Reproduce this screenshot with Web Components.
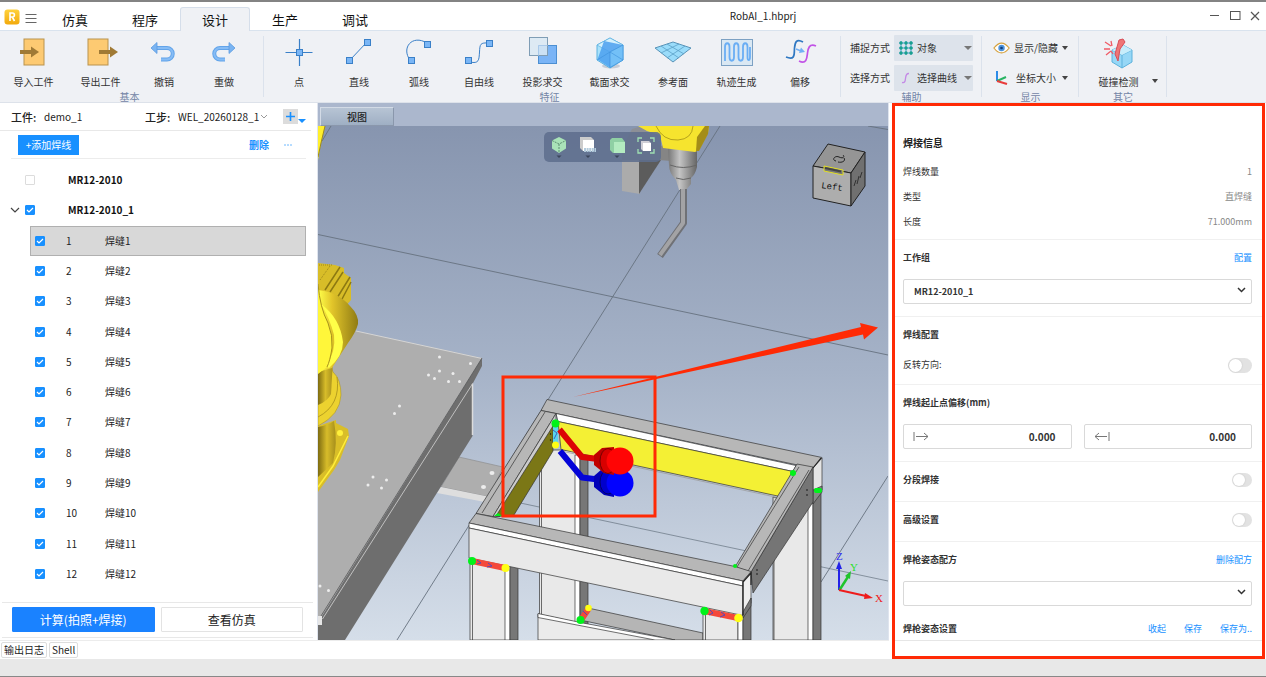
<!DOCTYPE html>
<html lang="zh-CN">
<head>
<meta charset="utf-8">
<title>RobAI_1.hbprj</title>
<style>
  html, body { margin: 0; min-height: 100%; }
  body { font: 10px/16px "Noto Sans CJK SC", sans-serif; color: #222; background: #fff; }
</style>
</head>
<body>
<robot-app></robot-app>
<script>
const BASE = `*{box-sizing:border-box}button,input,select{font:inherit;color:inherit;margin:0}button{border:0;background:none;padding:0}a{text-decoration:none;color:#1890ff}svg{display:block}`;
function component(name, css, html) {
  const t = document.createElement('template');
  t.innerHTML = `<style>${BASE}${css}</style>${typeof html === 'string' ? html : ''}`;
  customElements.define(name, class extends HTMLElement {
    constructor() {
      super();
      const root = this.attachShadow({ mode: 'open' });
      root.append(t.content.cloneNode(true));
      if (typeof html === 'function') root.lastChild.insertAdjacentHTML('afterend', html(this));
    }
  });
}

/* ---------- title bar ---------- */
component('title-bar', `
  :host{display:grid;grid-template-columns:auto auto 1fr 130px;height:31px;background:#fff;border-top:2px solid #838383;border-bottom:1px solid #d9e3ee}
  .brand{display:flex;align-items:center;gap:5px;width:40px;padding:0 0 0 4px}
  nav{display:flex;align-items:flex-end;height:29px}
  nav a{width:70px;height:24px;line-height:24px;text-align:center;font-size:13px;color:#111;border:1px solid transparent;border-bottom:0;border-radius:3px 3px 0 0}
  nav a[aria-current]{background:#eff1f5;border-color:#d5deea}
  h1{margin:0;padding-bottom:2px;align-self:center;text-align:center;font-size:10px;font-weight:400;line-height:16px}
  .win{display:flex;justify-content:flex-end;align-items:center;gap:10px;padding:0 6px 3px 0}
  .win button{width:10px;height:12px}
`, `
  <div class="brand">
    <svg width="16" height="16" viewBox="0 0 16 16"><defs><linearGradient id="g" x2="0" y2="1"><stop stop-color="#ffd23c"/><stop offset="1" stop-color="#f2a90c"/></linearGradient></defs><rect x=".5" y=".5" width="15" height="15" rx="3" fill="url(#g)"/><path d="M6 12V4h2.4a2 2 0 0 1 0 4H6m2.3 0L10.500 12" fill="none" stroke="#fff" stroke-width="1.600"/></svg>
    <svg width="12" height="12" viewBox="0 0 12 12"><path d="M.5 3.500h11M.5 7.500h11M.5 11.500h11" stroke="#666"/></svg>
  </div>
  <nav><a href="#">仿真</a><a href="#">程序</a><a href="#" aria-current="page">设计</a><a href="#">生产</a><a href="#">调试</a></nav>
  <h1>RobAI_1.hbprj</h1>
  <div class="win">
    <button aria-label="最小化"><svg width="10" height="12"><path d="M0 6.500h9" stroke="#555"/></svg></button>
    <button aria-label="最大化"><svg width="11" height="12"><rect x=".5" y="2.500" width="9.500" height="8" fill="none" stroke="#555"/></svg></button>
    <button aria-label="关闭"><svg width="10" height="12"><path d="M1 3l8 8M9 3l-8 8" stroke="#555" stroke-width="1.200"/></svg></button>
  </div>`);

/* ---------- ribbon ---------- */
component('ribbon-group', `
  :host{display:flex;flex-direction:column;height:71px;padding-top:4px;position:relative}
  :host::after{content:"";position:absolute;right:0;top:5px;height:61px;border-right:1px solid #dbe2ec}
  .row{display:flex;height:56px}
  .cap{height:11px;line-height:11px;text-align:center;color:#7385a6}
`, `<div class="row"><slot></slot></div><div class="cap"><slot name="caption"></slot></div>`);

component('tool-button', `
  :host{display:block;width:60px}
  :host([wide]){width:67px}
  button{display:flex;flex-direction:column;align-items:center;gap:5px;width:100%;white-space:nowrap;color:#333}
  .ic{width:34px;height:34px}
`, `<button><span class="ic"><slot name="icon"></slot></span><span><slot></slot></span></button>`);

const IC = {
  imp: `<rect x="7" y="4" width="20" height="26" fill="#fdca72" stroke="#b9934e"/><path d="M3 17h13" stroke="#a07a35" stroke-width="4"/><path d="M14 11.500l8 5.500-8 5.500z" fill="#a07a35"/>`,
  exp: `<rect x="4" y="4" width="20" height="26" fill="#fdca72" stroke="#b9934e"/><path d="M15 17h13" stroke="#a07a35" stroke-width="4"/><path d="M26 11.500l8 5.500-8 5.500z" fill="#a07a35"/>`,
  undo: `<path d="M9 13h11a5.500 5.500 0 0 1 0 11.500h-6" fill="none" stroke="#62a4ea" stroke-width="4"/><path d="M9 13h11a5.500 5.500 0 0 1 0 11.500h-6" fill="none" stroke="#86bcf5" stroke-width="2"/><path d="M10 7.500v11L4 13z" fill="#7ab4f2" stroke="#5b9be0" stroke-width=".8"/>`,
  redo: `<path d="M24 13H13a5.500 5.500 0 0 0 0 11.500h5" fill="none" stroke="#62a4ea" stroke-width="4"/><path d="M24 13H13a5.500 5.500 0 0 0 0 11.500h5" fill="none" stroke="#86bcf5" stroke-width="2"/><path d="M22 7.500v11l6-5.500z" fill="#7ab4f2" stroke="#5b9be0" stroke-width=".8"/>`,
  pt: `<path d="M3.500 17.500h27M17.500 4v27" stroke="#3a80c8" stroke-width="1.200"/><rect x="14.500" y="14.500" width="6" height="6" fill="#7ab6f6" stroke="#3a80c8"/>`,
  line: `<path d="M8 25L25 7" stroke="#3a80c8"/><rect x="4.500" y="22.500" width="6" height="6" fill="#7ab6f6" stroke="#3a80c8"/><rect x="22.500" y="4.500" width="6" height="6" fill="#7ab6f6" stroke="#3a80c8"/>`,
  arc: `<path d="M8 25C-1 13 10-1 25 8" fill="none" stroke="#3a80c8"/><rect x="6.500" y="22.500" width="6" height="6" fill="#7ab6f6" stroke="#3a80c8"/><rect x="22.500" y="6.500" width="6" height="6" fill="#7ab6f6" stroke="#3a80c8"/>`,
  free: `<path d="M8 27c9 2 9-2 9.500-10S18 7.500 27 8" fill="none" stroke="#3a80c8"/><rect x="3.500" y="22.500" width="6" height="6" fill="#7ab6f6" stroke="#3a80c8"/><rect x="24.500" y="5.500" width="6" height="6" fill="#7ab6f6" stroke="#3a80c8"/>`,
  proj: `<rect x="12.500" y="10.500" width="18" height="18" fill="#7ab4f6" stroke="#4c8fd2"/><rect x="3.500" y="2.500" width="18" height="18" fill="#d9e9f3" fill-opacity=".85" stroke="#7f9db5"/><path d="M12.500 20.500v-10h9" fill="none" stroke="#a9c9ea"/>`,
  cube: `<ellipse cx="18" cy="31" rx="9" ry="2.500" fill="#c6ccd6"/><path d="M17 3l13 7v15l-13 8-13-8V10z" fill="#a9e2fb" stroke="#5bb0e0"/><path d="M4 10l13-7 13 7-13 7z" fill="#d4f1fd" stroke="#5bb0e0" stroke-width=".7"/><path d="M11 6L4.500 24.500 17 32.500V17l13-7z" fill="#4ba0ee" opacity=".85"/><path d="M17 17v15.500L30 25V10z" fill="#73c0f7" stroke="#3c91dc" stroke-width=".7"/><path d="M4 25l13-8 13 8" fill="none" stroke="#3c91dc" stroke-width=".6"/>`,
  plane: `<path d="M-1 13L17 7l18 6-18 14z" fill="#9adcfa" stroke="#5a94b8"/><path d="M5 11l18 12M11 9l17 10M29 11L11 23M23 9L5 18" stroke="#5a9fc6" stroke-width=".8"/>`,
  track: `<rect x="1.500" y="4.500" width="31" height="26" fill="#dae8f3" stroke="#7da1c3"/><path d="M5 26V12c0-5 4.500-5 4.500 0v10c0 5 4.500 5 4.500 0V12c0-5 4.500-5 4.500 0v10c0 5 4.500 5 4.500 0V12c0-5 4.500-5 4.500 0v10c0 4 2.500 4 2.500 0V12" fill="none" stroke="#6aaef4" stroke-width="1.800"/>`,
  off: `<path d="M3 22c10 4 8-4 8.500-9S13 3 20 7" fill="none" stroke="#2f78c2" stroke-width="1.700"/><path d="M16 26c8 4 8-4 8.500-8S26 8 33 11" fill="none" stroke="#c153e6" stroke-width="1.700"/><path d="M13 14l5 2" stroke="#72b0f5" stroke-width="1.600"/><path d="M18 12.500l4 4.500-6 1z" fill="#72b0f5"/>`,
  hit: `<path d="M10 15l11-5 9 5v12l-10 6-10-6z" fill="#96d7f6" stroke="#5db1dc"/><path d="M10 15l10 5 10-5M20 20v13" fill="none" stroke="#5db1dc"/><path d="M10 15l11-5 9 5-10 5z" fill="#c7edfb"/><path d="M17 5l4-1 2 3-5 7-2 12-3-7z" fill="#ee7676" stroke="#d94c56"/><path d="M3 7l6 4M2 14l6 0M4 20l5-4M9 6l1 5M11 19l-2-3" stroke="#f05b66" stroke-width="1.300"/>`
};
const tool = (k, label, wide) => `<tool-button ${wide ? 'wide' : ''}><svg slot="icon" width="34" height="34" viewBox="0 0 34 34" overflow="visible">${IC[k]}</svg>${label}</tool-button>`;

component('ribbon-combo', `
  :host{display:block;position:relative;width:79px;height:26px}
  select{appearance:none;width:100%;height:100%;border:0;background:#dde3eb;padding:0 12px 0 23px;color:#333;border-radius:1px}
  .ic{position:absolute;left:5px;top:6px}
  i{position:absolute;right:1px;top:11px;border:4px solid transparent;border-top-color:#777;pointer-events:none}
`, el => `<select aria-label="${el.getAttribute('label')}"><option>${el.getAttribute('value')}</option></select><span class="ic"><slot></slot></span><i></i>`);

component('ribbon-bar', `
  :host{display:flex;height:72px;background:#eff1f5;border-bottom:1px solid #dde2ea;overflow:hidden}
  .g1{width:264px;padding-right:5px}.g2{width:577px;padding:4px 11px 0 5px}.g3{width:141px}.g4{width:97px}.g5{width:88px}
  .aux{display:grid;grid-template-columns:44px 79px;row-gap:3px;padding-left:9px;align-items:center;height:56px;color:#333}
  .show{display:grid;row-gap:3px;padding-left:11px}
  .show button{display:flex;align-items:center;height:26px;gap:4px;color:#333;white-space:nowrap}
  .tri{border:3px solid transparent;border-top:4px solid #444;border-bottom:0;flex:none}
  .show .tri{margin-left:auto}
  .show button{width:75px}
  .hit{display:flex;align-items:flex-start;padding-left:6px}
  .hit .tri{margin-top:44px}
`, `
  <ribbon-group class="g1">${tool('imp','导入工件',1)}${tool('exp','导出工件',1)}${tool('undo','撤销')}${tool('redo','重做')}<span slot="caption">基本</span></ribbon-group>
  <ribbon-group class="g2">${tool('pt','点')}${tool('line','直线')}${tool('arc','弧线')}${tool('free','自由线')}${tool('proj','投影求交',1)}${tool('cube','截面求交',1)}${tool('plane','参考面')}${tool('track','轨迹生成',1)}${tool('off','偏移')}<span slot="caption">特征</span></ribbon-group>
  <ribbon-group class="g3"><div class="aux">
    <span>捕捉方式</span><ribbon-combo label="捕捉方式" value="对象"><svg width="14" height="14" viewBox="0 0 14 14"><path d="M2 0v14M7 0v14M12 0v14M0 2h14M0 7h14M0 12h14" stroke="#3c9fd0"/><g fill="#1aa08d"><circle cx="2" cy="2" r="1.700"/><circle cx="7" cy="2" r="1.700"/><circle cx="12" cy="2" r="1.700"/><circle cx="2" cy="7" r="1.700"/><circle cx="7" cy="7" r="1.700"/><circle cx="12" cy="7" r="1.700"/><circle cx="2" cy="12" r="1.700"/><circle cx="7" cy="12" r="1.700"/><circle cx="12" cy="12" r="1.700"/></g></svg></ribbon-combo>
    <span>选择方式</span><ribbon-combo label="选择方式" value="选择曲线"><svg width="14" height="14" viewBox="0 0 14 14"><path d="M3 11.500c6 1.500 1-9.500 7-9" fill="none" stroke="#c48ae6" stroke-width="1.300"/></svg></ribbon-combo>
  </div><span slot="caption">辅助</span></ribbon-group>
  <ribbon-group class="g4"><div class="show">
    <button><svg width="19" height="14" viewBox="0 0 19 14"><path d="M1 7q8.500-11 17 0-8.500 11-17 0z" fill="#fff" stroke="#d5a13c" stroke-width="1.300"/><circle cx="9.500" cy="7" r="3.600" fill="#4d93dc"/><circle cx="9.500" cy="7" r="1.500" fill="#123f7c"/></svg><span>显示/隐藏</span><i class="tri"></i></button>
    <button><svg width="19" height="16" viewBox="0 0 19 16"><path d="M4 1v10" stroke="#2c8be8" stroke-width="2"/><path d="M4 11l9-4" stroke="#28b463" stroke-width="2"/><path d="M4 11l10 3" stroke="#e83b3b" stroke-width="2"/></svg><span>坐标大小</span><i class="tri"></i></button>
  </div><span slot="caption">显示</span></ribbon-group>
  <ribbon-group class="g5"><div class="hit">${tool('hit','碰撞检测',1)}<i class="tri"></i></div><span slot="caption">其它</span></ribbon-group>`);

/* ---------- left panel ---------- */
const check = `input[type=checkbox]{appearance:none;width:10px;height:10px;border:1px solid #dcdcdc;border-radius:1px;background:#fff;display:block}
input[type=checkbox]:checked{border-color:#1890ff;background:#1890ff url("data:image/svg+xml,%3Csvg xmlns='http://www.w3.org/2000/svg' viewBox='0 0 8 8'%3E%3Cpath d='M1 4l2 2 4-4' fill='none' stroke='white' stroke-width='1.200'/%3E%3C/svg%3E") center/8px}`;
component('seam-row', `
  :host{display:block;flex:1 1 0;min-height:20px;margin-left:30px}
  :host([selected]){background:#d8d8d8;box-shadow:inset 0 0 0 1px #b0b0b0}
  label{display:grid;grid-template-columns:31px 39px 1fr;align-items:center;height:100%;padding-left:5px}
  ${check}
`, el => `<label><input type="checkbox" checked><span>${el.getAttribute('n')}</span><span>焊缝${el.getAttribute('n')}</span></label>`);
component('group-row', `
  :host{display:block;flex:1 1 0;min-height:20px}
  label{display:grid;grid-template-columns:15px 43px 1fr;align-items:center;height:100%;padding-left:10px;font-weight:700;color:#111}
  ${check}
`, el => `<label><svg width="10" height="6" viewBox="0 0 10 6">${el.hasAttribute('open') ? '<path d="M1 1l4 4 4-4" fill="none" stroke="#444" stroke-width="1.200"/>' : ''}</svg><input type="checkbox" ${el.hasAttribute('open') ? 'checked' : ''}><span>${el.getAttribute('name')}</span></label>`);

component('weld-panel', `
  :host{display:flex;flex-direction:column;background:#fff;min-height:0}
  .head{display:grid;grid-template-columns:33px 101px 33px 90px 30px 8px;align-items:center;height:28px;padding-left:11px;margin-right:6px;border-bottom:1px solid #e8e8e8;color:#222}
  .head b{font-weight:500;font-size:11px}
  .job{position:relative;display:flex;align-items:center}
  .job select{appearance:none;width:81px;border:0;background:none;padding:0;height:16px;line-height:16px;overflow:hidden;text-overflow:clip}
  .job svg{margin-left:2px;flex:none}
  .plus{width:15px;height:15px;background:#dcdcdc;justify-self:end}
  .more{border:4px solid transparent;border-top:4px solid #1890ff;border-bottom:0;margin-top:8px;width:8px}
  .bar{display:flex;align-items:center;height:28px;margin:0 11px;padding:0 14px 0 7px;border-bottom:1px solid #ececec}
  .add{width:61px;height:20px;background:#1890ff;color:#fff}
  .del{margin-left:auto;font-weight:700}
  .dots{margin-left:15px;width:8px}
  .tree{flex:1;display:flex;flex-direction:column;padding:6px 11px 13px 0}
  .foot{display:grid;grid-template-columns:1fr 1fr;gap:6px;margin:0 4px 2px 2px;padding:4px 10px 5px;border-top:1px solid #e8e8e8;border-bottom:1px solid #e8e8e8}
  .foot button{height:25px;font-size:12px;border:1px solid #e3e3e3;border-radius:1px}
  .foot .go{background:#1a82ff;border-color:#1a82ff;color:#fff}
`, `
  <div class="head"><b>工件:</b><span>demo_1</span><b>工步:</b>
    <div class="job"><select aria-label="工步"><option>WEL_20260128_1</option></select><svg width="6" height="4" viewBox="0 0 6 4"><path d="M0 0l3 3 3-3" fill="none" stroke="#999"/></svg></div>
    <button class="plus" aria-label="新增"><svg width="15" height="15"><path d="M3 7.500h9M7.500 3v9" stroke="#1890ff" stroke-width="1.600"/></svg></button><i class="more"></i></div>
  <div class="bar"><button class="add">+添加焊线</button><a class="del" href="#">删除</a><a class="dots" href="#" aria-label="更多"><svg width="8" height="2"><path d="M0 1h2M3 1h2M6 1h2" stroke="#6db8ff"/></svg></a></div>
  <div class="tree"><group-row name="MR12-2010"></group-row><group-row open name="MR12-2010_1"></group-row>
  ${Array.from({length:12},(_,i)=>`<seam-row n="${i+1}" ${i?'':'selected'}></seam-row>`).join('')}</div>
  <div class="foot"><button class="go">计算(拍照+焊接)</button><button>查看仿真</button></div>`);

/* ---------- 3D view ---------- */
const holes = [[439.5,357],[470.500,363.500],[439.500,371],[453,373.500],[428.500,375],[434.500,378.500],[448.500,381.500],[459.500,381.500],[399.500,406],[394.500,413.500],[373,477],[386.500,480],[368,485],[381.500,488],[320,586],[328.500,590.500]];
component('scene-3d', `
  :host{display:block;position:relative;min-height:0;background:linear-gradient(#8795af,#a6b3c8 48%,#d5dee9)}
  svg.s{position:absolute;inset:0;width:100%;height:100%}
  text{font-family:"Liberation Mono",monospace}
  .axis text{font-family:"Liberation Serif",serif}
`, `
<svg class="s" viewBox="318 126 570 514" preserveAspectRatio="xMidYMid slice">
  <defs>
    <linearGradient id="y"><stop stop-color="#ffff4a"/><stop offset=".35" stop-color="#e2c52a"/><stop offset="1" stop-color="#8f7b14"/></linearGradient>
    <linearGradient id="y2"><stop stop-color="#7d6b10"/><stop offset=".5" stop-color="#d7bc2a"/><stop offset="1" stop-color="#a68f1c"/></linearGradient>
    <linearGradient id="m"><stop stop-color="#777"/><stop offset=".4" stop-color="#c4c4c4"/><stop offset="1" stop-color="#666"/></linearGradient>
  </defs>
  <g stroke="#66727f" fill="none"><path d="M318 234.500L888 355M720 126L397 640M331 126l-9 15M868 126l20 3.500M888 476l-67 106" stroke-width=".9"/><path d="M518 502.500L888 581" stroke-width=".7"/></g>
  <!-- work table -->
  <path d="M459 457l44 10-14 30-48-10z" fill="#aeaeae" stroke="#888" stroke-width=".6"/><path d="M441 487l49 10-5 5-48-9z" fill="#dedede"/>
  <path d="M318 331h38l126 27-160 258-4 4z" fill="#aeaeae"/><path d="M356 331l126 27.500" stroke="#d5d5d5"/>
  <path d="M482 358v8l-9.500 18v52L345 640h-27v-20l4-4z" fill="#6e6e6e"/>
  <path d="M472.500 384v51" stroke="#dcdcdc" stroke-width="1.500"/><path d="M473 383L322.500 619" stroke="#c9c9c9" stroke-width=".9"/><path d="M482 358L321 616" stroke="#555" stroke-width=".8"/>
  <rect x="318" y="616" width="4" height="9" fill="#e6e6e6"/>
  <g fill="#ededed">${holes.map(([x,y])=>`<circle cx="${x}" cy="${y}" r="1.500"/>`).join('')}<ellipse cx="492" cy="473" rx="2.500" ry="2"/><ellipse cx="483.500" cy="487" rx="2.500" ry="2"/></g>
  <!-- robot at the left edge -->
  <path d="M318 126h7l-4 17-3 17z" fill="#ffef2c"/><path d="M325 126l-4 17-3 14" fill="none" stroke="#9d8a1c"/>
  <path d="M318 263l17 2 9 3v5l7 5v22l-6 7-27-15z" fill="#d8bd28"/><path d="M340 267l-15 23M343 272l-13 20M350 277l-13 21M351 282l-10 19" stroke="#8d7912" stroke-width="1.500"/><path d="M319 265h14M330 266l-10 14" stroke="#9d871b" stroke-dasharray="1 1"/>
  <path d="M318 426l18-6v3l12 6 1 7-9 24-6 10-16 22z" fill="#d9be28"/><path d="M318 427q10-2 16-6 4 22-1 42l-15 14z" fill="url(#y2)"/><circle cx="340" cy="433" r="3" fill="#fff13c"/><path d="M348 436l-15 30-15 21" stroke="#ffee3a" fill="none" stroke-width="1.500"/>
  <path d="M318 366h13l2 6q8 7 8 23-1 20-23 31z" fill="#ecd22f" stroke="#a58e1c" stroke-width=".5"/><path d="M337 377q4 28-19 40" fill="none" stroke="#b59d20"/>
  <path d="M318 360h15l-2 34q-3 7-13 11z" fill="url(#y2)"/>
  <path d="M318 290q20 2 32 16 9 9 8 18-2 8-10 19l-16 25-14 4z" fill="url(#y)"/>
  <path d="M321 304q19 14 22 38 0 14-14 26l-3-2q10-14 8-31-4-16-13-31z" fill="#ffff48"/>
  <path d="M318 284q2 24 10 39 5 12 4 25-2 13-5 19l-9 7z" fill="#fff63a"/><path d="M318 284q2 24 10 39 5 12 4 25-2 13-5 19" fill="none" stroke="#a8921c"/>
  <!-- torch hanging from above -->
  <path d="M632 129l10-3 20 22-2 14-38-2v-12z" fill="#8c8f96"/><path d="M622 160h18v34l-18-3z" fill="#ababab"/><path d="M639 160h22l-22 34z" fill="#5c5c5c"/>
  <path d="M661 146l10-4 0 19-12-1z" fill="#858585"/><path d="M668 148l29 3v16q-2 8-6 11v6l-5 6h-7l-3-10q-7-7-7-15z" fill="url(#m)"/><path d="M670 165q13 5 27 0M676 178q7 3 15 0" fill="none" stroke="#666"/>
  <path d="M683.500 189v34L660 256" stroke="#6f7176" stroke-width="7" fill="none" stroke-linejoin="round"/><path d="M683 189v34L660 255" stroke="#a3a3a5" stroke-width="4" fill="none" stroke-linejoin="round"/>
  <path d="M638 126h71l-1 7-9 17-4 2-32-4-3-13-13-4z" fill="#f6e42e"/><path d="M697 137l8-11h4l-1 8-9 17h-3z" fill="#a48d18"/><path d="M656 126q7 15 22 14 14-1 15-14" fill="none" stroke="#a39016" stroke-width=".8"/>
  <!-- frame: rear posts -->
  <g stroke="#333" stroke-width=".7" stroke-linejoin="round">
    <path d="M539.500 472L552 450h25v190h-37.500z" fill="#e9e9e9"/><path d="M541.500 470v170" fill="none"/><path d="M575 455h5v185h-5z" fill="#fff"/><path d="M580 455h8v185h-8z" fill="#777"/>
    <path d="M773 497l4 1v142h-4z" fill="#d5d5d5"/><path d="M774 558l35-57v139h-35z" fill="#e9e9e9"/><path d="M808 503h5v137h-5z" fill="#fff"/><path d="M813 503l8-11v148h-8z" fill="#777"/>
    <path d="M588 608l115 25v7h-28l-95-20z" fill="#b5b5b5"/><path d="M538 614l122 26H538z" fill="#ebebeb"/><path d="M538 613.500l45 9.500 92 17h-20l-117-22.500z" fill="#fff"/>
    <!-- rear rail -->
    <path d="M547 399.500l275 58-8 11-258-55-15-3z" fill="#b7b7b7"/><path d="M556 413.500l240 52-3 6-235-50z" fill="#fff"/>
    <path d="M558 421.500l235 50-13 25-219-47z" fill="#f4f034"/><path d="M561 451l219 47" stroke="#999" fill="none"/>
    <path d="M822 458v32l-9 11v-33z" fill="#e4e4e4"/><path d="M813 490l9-4v6l-9 12z" fill="#888"/>
    <!-- left rail -->
    <path d="M541 410.500l15 3-63 103-17-3z" fill="#b7b7b7"/><path d="M556 413.500v10l-56 93h-7z" fill="#ccc"/><path d="M545 412l-63 101" fill="none"/><path d="M553 426v25l-40 65.500-17-.5z" fill="#7b7716"/>
    <!-- right rail -->
    <path d="M813 467v35l-60 91-2-21z" fill="#757575"/><path d="M797 464l16 3-62 105-16-5z" fill="#b7b7b7"/><path d="M799 467l-62 100M809 470l-61 101" fill="none"/>
    <!-- front posts -->
    <path d="M470 559h36v81h-36z" fill="#e9e9e9"/><path d="M505 566h5v74h-5z" fill="#fff"/><path d="M510 566h8v74h-8z" fill="#777"/><path d="M472.500 560v80" fill="none"/>
    <path d="M703 606h35v34h-35z" fill="#e9e9e9"/><path d="M738 610h5v30h-5z" fill="#fff"/><path d="M743 608l8-10v42h-8z" fill="#777"/><path d="M705.500 612v28" fill="none"/>
    <!-- front rail -->
    <path d="M476 513.500l259 53 16 5-8 9.500-274-58z" fill="#b7b7b7"/><path d="M469 523l274 58v5l-274-58z" fill="#fff"/><path d="M469 528l274 58v29.500L469 558z" fill="#e9e9e9"/><path d="M743 581l8-9v31l-8 12z" fill="#eee"/><path d="M743 612l8-14v8l-8 12z" fill="#777"/>
  </g>
  <path d="M743 615v-33l8-9v12M813 468l8-10" fill="none" stroke="#222" stroke-width="1.200"/>
  <g fill="#111"><circle cx="550.500" cy="434" r=".7"/><circle cx="550.500" cy="440" r=".7"/><circle cx="807" cy="490" r=".8"/><circle cx="807" cy="495" r=".8"/><circle cx="757" cy="570" r=".8"/><circle cx="757" cy="574" r=".8"/></g>
  <!-- welds -->
  <path d="M472 561l33 7M704 611l34 7M589 608l-8 12" stroke="#f4483a" stroke-width="6"/><path d="M477 560l4 3-4 1m11-1l4 3-5 1M710 610l3 3-4 2m12-3l4 3-5 2M583 611l4 4" stroke="#5548bb" fill="none"/>
  <path d="M555.500 426v18" stroke="#59d6ee" stroke-width="5"/><path d="M553 430l4 3-3 6" stroke="#3b5fc0" fill="none"/>
  <g fill="#00f21a"><circle cx="472" cy="561" r="4"/><circle cx="704.500" cy="611" r="4.200"/><circle cx="580.500" cy="620" r="4"/><circle cx="555.500" cy="423.500" r="4"/><circle cx="793" cy="473" r="3"/><rect x="814" y="488" width="8" height="5" rx="2"/><circle cx="735" cy="566" r="2"/><path d="M494 516l4-3 4 3z"/></g>
  <g fill="#ffff14"><circle cx="505.500" cy="568" r="4"/><circle cx="738.500" cy="618" r="4.300"/><circle cx="588.500" cy="608" r="3.300"/><circle cx="555.500" cy="445" r="3.500"/></g>
  <g fill="none" stroke-width="6" stroke-linejoin="round"><path d="M560 451l22 26.500 16 2" stroke="#0404d8"/><path d="M559.500 429.500L582 457l16 2" stroke="#dc0505"/></g>
  <path d="M594 476l8-7 12-1v29l-10-2-10-8z" fill="#0000b8"/><ellipse cx="608" cy="482" rx="8" ry="12" fill="#0000cc" stroke="#00006a"/><circle cx="620" cy="483" r="13.500" fill="#0202ff"/>
  <path d="M594 455l8-7 12-1v28l-10-2-10-8z" fill="#c00000"/><ellipse cx="608" cy="461" rx="8" ry="12.500" fill="#d80000" stroke="#700"/><circle cx="620" cy="461" r="13.500" fill="#ff0505"/>
  <!-- orientation cube -->
  <g stroke="#222" stroke-linejoin="round"><path d="M828 144l37 8-14 21-38-7z" fill="#959595"/><path d="M813 166l38 7v33l-38-8z" fill="#adadad"/><path d="M851 173l14-21v34l-14 20z" fill="#707070"/></g>
  <path d="M824 166l19 4v5l-19-4z" fill="#777" stroke="#e3df24"/><path d="M825 168l16 3.500" stroke="#444" stroke-width="2"/>
  <text x="821" y="188" font-size="9" fill="#111" transform="rotate(8 821 188)">Left</text>
  <path d="M836 161c-5-1-1-6 3-4s6 0 4-2M838 162c4 1 8-1 6-4" fill="none" stroke="#222"/>
  <path d="M854 186l2-6M857 184l2-8M860 178l2-6" stroke="#222" stroke-width=".8"/>
  <!-- axes -->
  <path d="M839 590v-22" stroke="#2222e8" stroke-width="2"/><path d="M836 569l3-8 3 8z" fill="#2222e8"/>
  <path d="M839.500 590l9-14" stroke="#1fc42b" stroke-width="2.500"/><path d="M845 576l6-5-1 8z" fill="#1fc42b"/>
  <path d="M839 590l27 6" stroke="#ee1c1c" stroke-width="2"/><path d="M865 593l8 5-9 1z" fill="#ee1c1c"/>
  <g class="axis" font-size="11"><text x="836" y="560" fill="#2a2aee">Z</text><text x="850" y="571" fill="#2be02b">Y</text><text x="875" y="602" fill="#ee2020">X</text></g>
  <!-- callout -->
  <rect x="503" y="377" width="152" height="139" fill="none" stroke="#ff2a05" stroke-width="3"/>
  <path d="M573 397L861 327l-1-4 18 4.500-14 12-1-5z" fill="#ff2a05"/>
</svg>`);

component('view-tools', `
  :host{display:flex;justify-content:space-around;align-items:center;width:117px;height:30px;border-radius:5px;background:rgba(94,110,141,.88)}
  button{width:22px;height:26px}
`, `
  <button aria-label="视角"><svg width="22" height="26" viewBox="0 0 22 26"><path d="M11 3l7 3.500v8L11 19l-7-4.500v-8z" fill="#a9e3b8"/><path d="M4 6.500l7 3.500 7-3.500M11 10v9" fill="none" stroke="#5d8f73" stroke-dasharray="2 1"/><path d="M8.500 21.500h5L11 24z" fill="#3b455a"/></svg></button>
  <button aria-label="实体"><svg width="22" height="26" viewBox="0 0 22 26"><path d="M3 3h11l3 3v11H6l-3-3z" fill="#ccc"/><rect x="6" y="6" width="11" height="11" fill="#fff"/><path d="M7 16h12" stroke="#b3cbdc" stroke-width="4" stroke-dasharray="2 .6"/><path d="M8.500 21.500h5L11 24z" fill="#3b455a"/></svg></button>
  <button aria-label="显示"><svg width="22" height="26" viewBox="0 0 22 26"><path d="M4 6l2-2h10l3 4v11H7l-3-3z" fill="#8fd0a4"/><rect x="8" y="8" width="11" height="11" fill="#b3ebc0"/><path d="M8.500 21.500h5L11 24z" fill="#3b455a"/></svg></button>
  <button aria-label="适应"><svg width="22" height="26" viewBox="0 0 22 26"><path d="M3 8V4h4M15 4h4v4M3 15v4h4M15 19h4v-4" fill="none" stroke="#9fe0b2" stroke-width="1.300"/><path d="M6 7h8l2 2v8H8l-2-2z" fill="#cfcfd6"/><rect x="8" y="9" width="8" height="8" fill="#fff"/></svg></button>`);

component('view-pane', `
  :host{display:flex;flex-direction:column;border:0 solid #dfe4ee;border-width:0 1px;min-width:0}
  .tabs{height:23px;background:#abb7cd;padding:4px 2px 0}
  .tabs button{display:block;width:74px;height:19px;font-weight:500;color:#222;background:linear-gradient(#b7c4d4,#9fafc4);border:1px solid #8a97ac;border-left-color:#d3dbe6;border-top-color:#d3dbe6}
  .stage{position:relative;flex:1;display:grid;min-height:0}
  view-tools{position:absolute;left:50%;top:6px;margin-left:-59px}
`, `<div class="tabs"><button>视图</button></div><div class="stage"><scene-3d></scene-3d><view-tools></view-tools></div>`);

/* ---------- right panel ---------- */
component('toggle-switch', `
  :host{display:block;width:20px;height:14px}
  :host([large]){width:24px;height:15px}
  input{appearance:none;display:block;width:100%;height:100%;border-radius:8px;background:#e2e2e2;position:relative}
  input::before{content:"";position:absolute;left:1px;top:1px;bottom:1px;aspect-ratio:1;border-radius:50%;background:#fff;box-shadow:0 0 2px rgba(0,0,0,.15)}
`, el => `<input type="checkbox" role="switch" aria-label="${el.getAttribute('label')}">`);
component('select-box', `
  :host{display:block;position:relative;height:25px}
  select{appearance:none;width:100%;height:100%;border:1px solid #d9d9d9;border-radius:2px;background:#fff;padding:0 20px 0 10px;font-weight:700;font-size:9px}
  svg{position:absolute;right:6px;top:8px;pointer-events:none}
`, el => `<select aria-label="${el.getAttribute('label')}"><option>${el.getAttribute('value') || ''}</option></select><svg width="9" height="6" viewBox="0 0 9 6"><path d="M1 1l3.500 3.500L8 1" fill="none" stroke="#333" stroke-width="1.500"/></svg>`);
component('offset-field', `
  :host{display:flex;align-items:center;height:25px;border:1px solid #d9d9d9;border-radius:2px;padding:0 15px 0 9px;min-width:0}
  input{flex:1;min-width:0;border:0;background:none;padding:0;text-align:right;font-weight:700;font-size:10px;outline:0;height:16px}
`, el => `<slot></slot><input aria-label="${el.getAttribute('label')}" value="0.000">`);
component('panel-section', `
  :host{display:block;padding:0 10px 0 8px;border-bottom:1px solid #f0f0f0}
  header{display:flex;align-items:center;justify-content:space-between;height:36px;font-weight:700}
  ::slotted([slot=action]){font-weight:400}
`, `<header><slot name="title"></slot><slot name="action"></slot></header><slot></slot>`);

component('seam-inspector', `
  :host{display:block;margin:0 1px 0 3px;border:3px solid #ff2a05;background:#fff;font-size:9px;color:#333}
  .body{border-bottom:1px solid #e6e6e6}
  .info{padding:29px 10px 5px 8px;border-bottom:1px solid #f0f0f0}
  h2{margin:0 0 8px;font-size:10px;line-height:16px;font-weight:700;color:#222}
  dl{margin:0}dl div{display:flex;justify-content:space-between;height:25px;align-items:center}dd{margin:0;color:#888}
  .gap3{padding-bottom:3px}.field{padding-top:3px;padding-bottom:12px}
  .rev{display:flex;justify-content:space-between;align-items:center;height:24px;margin-bottom:7px}
  .pair{display:grid;grid-template-columns:1fr 1fr;gap:12px}
  .last{padding:3px 0 3px}
  .set{display:flex;gap:18px;margin-top:15px;line-height:16px}.set b{margin-right:auto}
`, `
 <div class="body">
  <div class="info"><h2>焊接信息</h2><dl><div><dt>焊线数量</dt><dd>1</dd></div><div><dt>类型</dt><dd>直焊缝</dd></div><div><dt>长度</dt><dd>71.000mm</dd></div></dl></div>
  <panel-section><span slot="title">工作组</span><a slot="action" href="#">配置</a><div class="field"><select-box label="工作组" value="MR12-2010_1"></select-box></div></panel-section>
  <panel-section><span slot="title">焊线配置</span><div class="rev"><span>反转方向:</span><toggle-switch large label="反转方向"></toggle-switch></div></panel-section>
  <panel-section><span slot="title">焊线起止点偏移(mm)</span><div class="field pair">
    <offset-field label="起点偏移"><svg width="16" height="9" viewBox="0 0 16 9"><path d="M1 0v9M3 4.500h12M11 1l4 3.500-4 3.500" fill="none" stroke="#777"/></svg></offset-field>
    <offset-field label="终点偏移"><svg width="16" height="9" viewBox="0 0 16 9"><path d="M15 0v9M13 4.500H1M5 1L1 4.500 5 8" fill="none" stroke="#777"/></svg></offset-field></div></panel-section>
  <panel-section class="gap3"><span slot="title">分段焊接</span><toggle-switch slot="action" label="分段焊接"></toggle-switch></panel-section>
  <panel-section class="gap3"><span slot="title">高级设置</span><toggle-switch slot="action" label="高级设置"></toggle-switch></panel-section>
  <panel-section style="border:0"><span slot="title">焊枪姿态配方</span><a slot="action" href="#">删除配方</a><div class="last"><select-box label="焊枪姿态配方"></select-box>
    <div class="set"><b>焊枪姿态设置</b><a href="#">收起</a><a href="#">保存</a><a href="#">保存为..</a></div></div></panel-section>
 </div>`);

/* ---------- bottom ---------- */
component('log-tabs', `
  :host{display:flex;gap:2px;padding:1px 1px 2px;background:#fff;border-top:1px solid #ececec}
  button{height:16px;line-height:14px;border:1px solid #ddd;border-radius:2px;padding:0 2px;color:#222}
`, `<button>输出日志</button><button>Shell</button>`);

component('robot-app', `
  :host{display:grid;grid-template-rows:auto auto 1fr auto;min-height:100vh}
  main{display:grid;grid-template-columns:317px minmax(0,1fr) 377px;grid-template-rows:1fr 19px;min-height:0}
  seam-inspector{grid-column:3;grid-row:1/3}
  log-tabs{grid-column:1/3}
  footer{height:18px;background:#e8e8e8;border-bottom:1px solid #888}
`, `<title-bar></title-bar><ribbon-bar></ribbon-bar><main><weld-panel></weld-panel><view-pane></view-pane><seam-inspector></seam-inspector><log-tabs></log-tabs></main><footer></footer>`);
</script>
</body>
</html>
